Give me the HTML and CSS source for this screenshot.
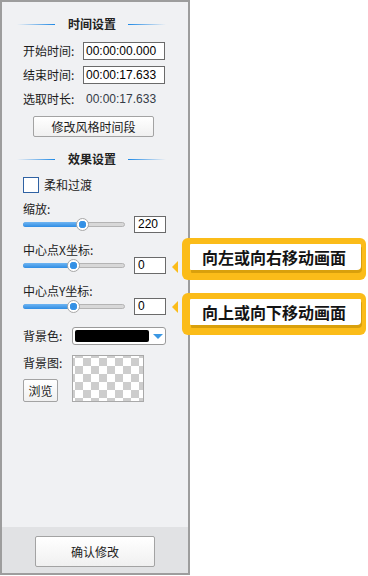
FILE: index.html
```html
<!DOCTYPE HTML>
<html>
<head>
  <meta http-equiv="Content-Type" content="text/html; charset=UTF-8">
  <title>效果设置</title>
  <link rel="stylesheet" href="styles.css">
</head>
<body>
  <div class="panel">
    <div class="content">
      <div class="section-title">
        <span class="line line-left"></span>
        <span class="title-text">时间设置</span>
        <span class="line line-right"></span>
      </div>

      <div class="row first">
        <span class="label">开始时间:</span>
        <span class="field time">00:00:00.000</span>
      </div>
      <div class="row">
        <span class="label">结束时间:</span>
        <span class="field time">00:00:17.633</span>
      </div>
      <div class="row">
        <span class="label">选取时长:</span>
        <span class="value">00:00:17.633</span>
      </div>
      <div class="button range-button">修改风格时间段</div>

      <div class="section-title second">
        <span class="line line-left"></span>
        <span class="title-text">效果设置</span>
        <span class="line line-right"></span>
      </div>

      <div class="check-row">
        <span class="checkbox"></span>
        <span class="check-label">柔和过渡</span>
      </div>

      <div class="slider-label first-label">缩放:</div>
      <div class="slider-row">
        <div class="slider">
          <div class="track"></div>
          <div class="fill" style="width: 59px"></div>
          <div class="thumb" style="left: 53px"></div>
        </div>
        <span class="field number">220</span>
      </div>

      <div class="slider-label">中心点X坐标:</div>
      <div class="slider-row">
        <div class="slider">
          <div class="track"></div>
          <div class="fill" style="width: 50px"></div>
          <div class="thumb" style="left: 44px"></div>
        </div>
        <span class="field number">0</span>
      </div>

      <div class="slider-label">中心点Y坐标:</div>
      <div class="slider-row">
        <div class="slider">
          <div class="track"></div>
          <div class="fill" style="width: 50px"></div>
          <div class="thumb" style="left: 44px"></div>
        </div>
        <span class="field number">0</span>
      </div>

      <div class="color-row">
        <span class="short-label">背景色:</span>
        <div class="dropdown">
          <span class="swatch"></span>
          <span class="arrow"></span>
        </div>
      </div>

      <div class="image-row">
        <div class="image-side">
          <span class="short-label">背景图:</span>
          <div class="button browse">浏览</div>
        </div>
        <div class="checker"></div>
      </div>
    </div>

    <div class="footer">
      <div class="button confirm">确认修改</div>
    </div>
  </div>

  <span class="pointer pointer-x"></span>
  <div class="callout callout-x">
    <div class="callout-inner">向左或向右移动画面</div>
  </div>

  <span class="pointer pointer-y"></span>
  <div class="callout callout-y">
    <div class="callout-inner">向上或向下移动画面</div>
  </div>
</body>
</html>
```

FILE: styles.css
```css
body, html {
    margin: 0;
    padding: 0;
    background-color: #fff;
    color: #1c1c1c;
    font-family: "Noto Sans CJK SC", "Liberation Sans", sans-serif;
    font-size: 12px;
}

.panel {
    width: 186px;
    height: 571px;
    border: 2px solid #9d9d9d;
    background-color: #f0f1f3;
    display: flex;
    flex-direction: column;
}

.content {
    flex: 1;
    padding-left: 21px;
}

.section-title {
    display: flex;
    align-items: center;
    height: 16px;
    margin-top: 14px;
    margin-left: -6px;
}

.section-title.second {
    margin-top: 14px;
}

.line {
    display: block;
    width: 38px;
    height: 1px;
}

.line-left {
    background: linear-gradient(to right, rgba(30, 136, 229, 0), #1e88e5);
}

.line-right {
    background: linear-gradient(to right, #1e88e5, rgba(30, 136, 229, 0));
}

.title-text {
    margin: 0 12px 0 13px;
    font-weight: bold;
    line-height: 16px;
    color: #222;
}

.row {
    display: flex;
    align-items: center;
    height: 18px;
    margin-top: 6px;
}

.row.first {
    margin-top: 10px;
}

.label {
    width: 60px;
    line-height: 18px;
}

.field {
    box-sizing: border-box;
    background-color: #fff;
    border: 1px solid #6a6a6a;
    font-family: "Liberation Sans", sans-serif;
    font-size: 12px;
    color: #000;
}

.time {
    width: 82px;
    height: 18px;
    line-height: 16px;
    padding-left: 2px;
}

.value {
    padding-left: 3px;
    font-family: "Liberation Sans", sans-serif;
    color: #343b46;
}

.button {
    box-sizing: border-box;
    border: 1px solid #a3a3a3;
    border-radius: 2px;
    background: linear-gradient(#ffffff, #f0f0f0);
    text-align: center;
    color: #1c1c1c;
}

.range-button {
    width: 121px;
    height: 21px;
    line-height: 19px;
    margin-top: 8px;
    margin-left: 10px;
}

.check-row {
    display: flex;
    align-items: center;
    height: 16px;
    margin-top: 10px;
}

.checkbox {
    box-sizing: border-box;
    width: 16px;
    height: 16px;
    border: 1px solid #2f62a3;
    background-color: #fff;
}

.check-label {
    margin-left: 5px;
    line-height: 16px;
}

.slider-label {
    height: 15px;
    line-height: 15px;
    margin-top: 9px;
}

.slider-label.first-label {
    margin-top: 8px;
}

.slider-row {
    display: flex;
    align-items: center;
    height: 17px;
}

.slider {
    position: relative;
    width: 102px;
    height: 13px;
    margin-right: 9px;
}

.track {
    position: absolute;
    left: 0;
    right: 0;
    top: 4px;
    height: 5px;
    box-sizing: border-box;
    border: 1px solid #b4b4b4;
    border-radius: 3px;
    background-color: #d8d8d8;
}

.fill {
    position: absolute;
    left: 0;
    top: 4px;
    height: 5px;
    border-radius: 3px 0 0 3px;
    background: linear-gradient(#6fb5f2, #2f8de4);
}

.thumb {
    position: absolute;
    top: 0;
    width: 13px;
    height: 13px;
    box-sizing: border-box;
    border: 1px solid #a8a8a8;
    border-radius: 50%;
    background: radial-gradient(circle, #2f8de4 0, #3b95e6 3.5px, #fff 4px);
}

.number {
    width: 32px;
    height: 17px;
    line-height: 15px;
    padding-left: 3px;
}

.color-row {
    display: flex;
    align-items: center;
    height: 18px;
    margin-top: 12px;
}

.short-label {
    display: block;
    width: 49px;
    line-height: 16px;
}

.dropdown {
    box-sizing: border-box;
    width: 94px;
    height: 18px;
    padding: 2px;
    border: 1px solid #9a9a9a;
    border-radius: 3px;
    background-color: #fff;
    display: flex;
    align-items: center;
}

.swatch {
    display: block;
    width: 74px;
    height: 12px;
    border-radius: 2px;
    background-color: #000;
}

.arrow {
    display: block;
    margin-left: 4px;
    width: 0;
    height: 0;
    border-left: 5px solid transparent;
    border-right: 5px solid transparent;
    border-top: 5px solid #3b97e3;
}

.image-row {
    display: flex;
    margin-top: 10px;
}

.image-side {
    width: 49px;
}

.browse {
    width: 35px;
    height: 23px;
    line-height: 21px;
    margin-top: 8px;
}

.checker {
    box-sizing: border-box;
    width: 72px;
    height: 47px;
    border: 1px solid #a9a9a9;
    background-color: #fff;
    background-image: conic-gradient(#cdcdcd 25%, #fff 0 50%, #cdcdcd 0 75%, #fff 0);
    background-size: 16px 16px;
    background-position: 2px 2px;
}

.footer {
    height: 46px;
    background-color: #e1e2e4;
    display: flex;
    justify-content: center;
    align-items: center;
}

.confirm {
    width: 120px;
    height: 31px;
    line-height: 29px;
    margin-top: 3px;
}

/* callouts sit outside the panel, next to the inputs they explain */
.callout {
    position: absolute;
    left: 182px;
    width: 184px;
    height: 42px;
    box-sizing: border-box;
    padding: 6px 5px 7px 8px;
    border-radius: 6px;
    background-color: #fbbc19;
}

.callout-x {
    top: 238px;
}

.callout-y {
    top: 293px;
}

.callout-inner {
    height: 26px;
    line-height: 26px;
    padding-left: 12px;
    border-radius: 1px 1px 4px 1px;
    background-color: #fff;
    box-shadow: 1px 3px 0 #d9a00c;
    font-size: 16px;
    font-weight: bold;
    color: #141414;
}

.pointer {
    position: absolute;
    left: 172px;
    width: 0;
    height: 0;
    border-top: 6px solid transparent;
    border-bottom: 6px solid transparent;
    border-right: 6px solid #fbbc19;
}

.pointer-x {
    top: 261px;
}

.pointer-y {
    top: 301px;
}
```
